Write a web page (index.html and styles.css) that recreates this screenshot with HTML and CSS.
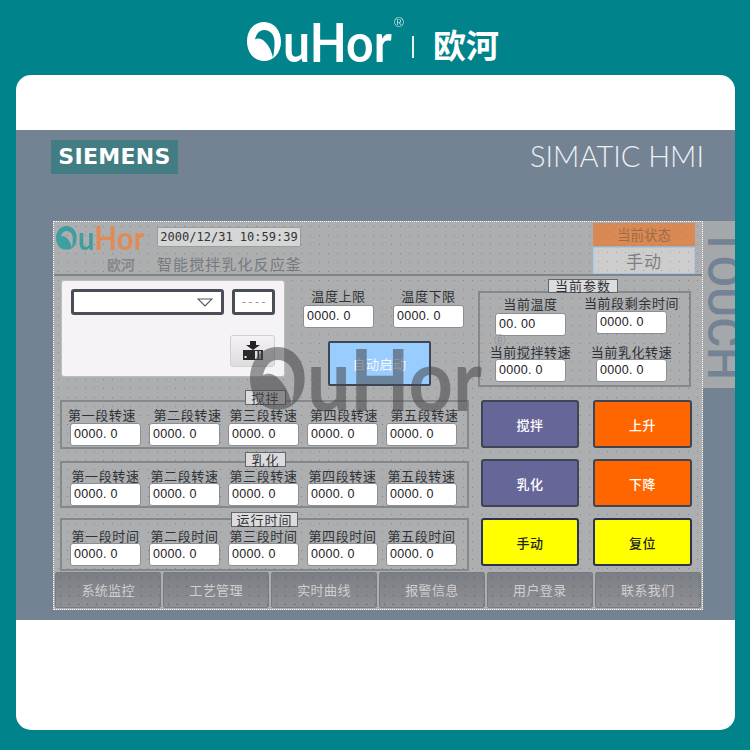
FILE: index.html
```html
<!DOCTYPE html>
<html lang="zh">
<head>
<meta charset="utf-8">
<title>QuHor SIMATIC HMI</title>
<link rel="stylesheet" href="styles.css">
</head>
<body>
<svg class="defs" width="0" height="0" aria-hidden="true">
  <symbol id="logo-o" viewBox="0 0 34 39">
    <path fill-rule="evenodd" d="M17 0C27 0 34 8.500 34 19.500C34 30.500 27 39 17 39C7 39 0 30.500 0 19.500C0 8.500 7 0 17 0ZM8 17.500C9.500 11.500 12.500 8 17 8C23.500 8 27.500 13 27.500 20C27.500 26 27 31 26 35.500C24 27 20 20.500 15 17.500C12 16 9.500 16.500 8 17.500Z"/>
  </symbol>
</svg>

<header class="top">
  <div class="logo logo-head">
    <svg class="logo-o"><use href="#logo-o"/></svg><span class="logo-rest">uHor</span><sup class="logo-reg">®</sup>
  </div>
  <span class="top-rule"></span>
  <span class="top-cn">欧河</span>
</header>

<main class="device">
  <div class="bezel-blank"></div>
  <section class="bezel">
    <div class="brand-row">
      <span class="siemens">SIEMENS</span>
      <span class="simatic">SIMATIC HMI</span>
    </div>
    <div class="screen-row">
      <div class="screen">
        <div class="screen-head">
          <div class="head-logo">
            <div class="logo logo-small">
              <svg class="logo-o"><use href="#logo-o"/></svg><span class="logo-rest">uHor</span>
            </div>
            <span class="head-logo-cn">欧河</span>
          </div>
          <div class="head-text">
            <span class="date">2000/12/31 10:59:39</span>
            <span class="title">智能搅拌乳化反应釜</span>
          </div>
          <div class="status">
            <span class="status-label">当前状态</span>
            <span class="status-value">手动</span>
          </div>
        </div>

        <div class="screen-body">
          <div class="col-left">
            <div class="top-row">
              <div class="panel">
                <div class="panel-row">
                  <div class="select">
                    <svg class="select-arrow" viewBox="0 0 16 9"><path d="M1 1H15L8 8Z" fill="none" stroke="#55585f" stroke-width="1.200"/></svg>
                  </div>
                  <div class="select select-short">----</div>
                </div>
                <div class="panel-action">
                  <button class="icon-btn" aria-label="下载">
                    <svg viewBox="0 0 22 20" width="22" height="20"><path d="M8 0H14V4H18L11 9L4 4H8Z" fill="#222"/><rect x="1" y="9" width="20" height="10" fill="#2b2b2b"/><rect x="2.500" y="15" width="2" height="2" fill="#eee"/><rect x="13" y="10" width="2.500" height="8" fill="#ddd"/><rect x="17" y="10" width="2" height="8" fill="#aaa"/></svg>
                  </button>
                </div>
              </div>
              <div class="limits">
                <div class="limit-grid">
                  <div class="field"><span class="label">温度上限</span><span class="input">0000. 0</span></div>
                  <div class="field"><span class="label">温度下限</span><span class="input">0000. 0</span></div>
                </div>
                <button class="auto-btn">自动启动</button>
              </div>
            </div>

            <section class="group group-a">
              <span class="legend legend-a">搅拌</span>
              <div class="five">
                <span class="label nudge-l7">第一段转速</span><span class="label nudge-r6">第二段转速</span><span class="label">第三段转速</span><span class="label nudge-r3">第四段转速</span><span class="label nudge-r6">第五段转速</span>
                <span class="input">0000. 0</span><span class="input">0000. 0</span><span class="input">0000. 0</span><span class="input">0000. 0</span><span class="input">0000. 0</span>
              </div>
            </section>

            <section class="group group-b">
              <span class="legend legend-a">乳化</span>
              <div class="five">
                <span class="label">第一段转速</span><span class="label">第二段转速</span><span class="label">第三段转速</span><span class="label">第四段转速</span><span class="label">第五段转速</span>
                <span class="input">0000. 0</span><span class="input">0000. 0</span><span class="input">0000. 0</span><span class="input">0000. 0</span><span class="input">0000. 0</span>
              </div>
            </section>

            <section class="group group-c">
              <span class="legend legend-c">运行时间</span>
              <div class="five">
                <span class="label">第一段时间</span><span class="label">第二段时间</span><span class="label">第三段时间</span><span class="label">第四段时间</span><span class="label">第五段时间</span>
                <span class="input">0000. 0</span><span class="input">0000. 0</span><span class="input">0000. 0</span><span class="input">0000. 0</span><span class="input">0000. 0</span>
              </div>
            </section>
          </div>

          <div class="col-right">
            <section class="group group-params">
              <span class="legend legend-params">当前参数</span>
              <div class="params">
                <div class="field"><span class="label">当前温度</span><span class="input">00. 00</span></div>
                <div class="field field-raised"><span class="label">当前段剩余时间</span><span class="input">0000. 0</span></div>
                <div class="field field-low"><span class="label">当前搅拌转速</span><span class="input">0000. 0</span></div>
                <div class="field field-low"><span class="label">当前乳化转速</span><span class="input">0000. 0</span></div>
              </div>
            </section>
            <div class="actions">
              <button class="action action-purple">搅拌</button>
              <button class="action action-orange">上升</button>
              <button class="action action-purple">乳化</button>
              <button class="action action-orange">下降</button>
              <button class="action action-yellow">手动</button>
              <button class="action action-yellow">复位</button>
            </div>
          </div>
        </div>

        <nav class="tabs">
          <span class="tab">系统监控</span>
          <span class="tab">工艺管理</span>
          <span class="tab">实时曲线</span>
          <span class="tab">报警信息</span>
          <span class="tab">用户登录</span>
          <span class="tab">联系我们</span>
        </nav>
      </div>
      <div class="touch"><span class="touch-text">TOUCH</span></div>
    </div>
    <div class="logo logo-mark">
      <svg class="logo-o"><use href="#logo-o"/></svg><span class="logo-rest">uHor</span><sup class="logo-reg">®</sup>
    </div>
  </section>
  <div class="bezel-foot"></div>
</main>
</body>
</html>
```
FILE: styles.css
```css
* { box-sizing: border-box; }
html, body { margin: 0; padding: 0; }
body {
  width: 750px;
  height: 750px;
  overflow: hidden;
  background: #00838a;
  font-family: "Noto Sans CJK SC", "Liberation Sans", sans-serif;
}
.defs { position: absolute; }

/* logo */
.logo { display: flex; align-items: flex-end; font-family: Lato, sans-serif; font-weight: 700; line-height: 1; }
.logo-o { fill: currentColor; flex: none; width: .63em; height: .722em; }
.logo-rest {
  display: block;
  flex: none;
  width: 2.4em;
  height: .722em;
  line-height: .722em;
  margin-left: .03em;
  transform: scaleX(.89);
  transform-origin: left center;
  white-space: nowrap;
}
.logo-reg { font-size: .25em; line-height: 1; opacity: .75; font-family: "Liberation Sans", sans-serif; font-weight: 400; }

/* header */
.top { height: 75px; padding: 22px 0 0 247px; display: flex; align-items: flex-start; color: #fff; }
.logo-head { font-size: 54px; width: 148px; position: relative; }
.logo-head .logo-reg { position: absolute; left: 147px; top: -6px; }
.top-rule { width: 2px; height: 22px; margin: 14px 0 0 17px; background: #e6f3f3; }
.top-cn { font-size: 33px; font-weight: 700; line-height: 36px; margin: 4px 0 0 19px; letter-spacing: 0; }

/* device */
.device { width: 719px; height: 655px; margin-left: 16px; background: #fff; border-radius: 15px; overflow: hidden; }
.bezel-blank { height: 55px; }
.bezel { height: 490px; background: #748394; position: relative; }
.brand-row { height: 91px; padding: 10px 31px 0 35px; display: flex; justify-content: space-between; align-items: flex-start; }
.siemens {
  width: 127px; height: 34px; background: #417d83; color: #fff;
  font: 700 22px/34px "DejaVu Sans", "Liberation Sans", sans-serif;
  letter-spacing: .3px; text-align: center;
}
.simatic { font: 300 29px/36px Lato, sans-serif; color: #edf0f3; white-space: nowrap; margin-top: -2px; }
.screen-row { display: flex; align-items: flex-start; padding-left: 37px; }

/* screen */
.screen {
  width: 650px; height: 389px;
  border: 1px dotted #fff;
  background-color: #adaeb0;
  background-image: radial-gradient(circle, #84868a .7px, transparent 1px);
  background-size: 9px 9px;
  display: flex; flex-direction: column;
}
.touch { width: 32px; height: 167px; background: #a5a8ab; overflow: hidden; }
.touch-text {
  display: block;
  writing-mode: vertical-rl;
  font: 500 46px/46px Roboto, sans-serif;
  color: #748394;
  margin: 7px 0 0 -2px;
  white-space: nowrap;
}

.screen-head { height: 54px; flex: none; display: flex; border-bottom: 2px solid #808488; }
.head-logo { width: 103px; padding: 4px 0 0 2px; display: flex; flex-direction: column; }
.logo-small { font-size: 33px; height: 24px; color: #e08a55; }
.logo-small .logo-o { color: #3f9ea0; }
.head-logo-cn { font-size: 14px; line-height: 16px; color: #85888b; font-weight: 700; align-self: flex-end; margin: 6px 22px 0 0; }
.logo-small .logo-rest { background: linear-gradient(90deg, #3f9ea0 23%, #e08a55 23%); -webkit-background-clip: text; background-clip: text; color: transparent; }
.head-text { width: 436px; padding-top: 5px; display: flex; flex-direction: column; align-items: flex-start; }
.date {
  width: 144px; height: 20px; background: #d5d6d6; border: 1px solid #9b9d9f; border-radius: 2px;
  font: 12px/18px "DejaVu Sans Mono", monospace; color: #333; text-align: center; white-space: nowrap;
}
.title { font-size: 15px; line-height: 18px; margin-top: 8px; color: #777a7d; letter-spacing: 1.1px; white-space: nowrap; }
.status { width: 102px; padding-top: 1px; display: flex; flex-direction: column; }
.status-label {
  height: 23px; background-color: #d98a54; background-image: radial-gradient(circle, #bd7a4e .7px, transparent 1px); background-size: 9px 9px;
  color: #a06a48; font-size: 13.500px; line-height: 23px; text-align: center;
}
.status-value {
  height: 27px; margin-top: 1px; background-color: #cdcdcd; background-image: radial-gradient(circle, #a2a3a5 .7px, transparent 1px); background-size: 9px 9px;
  border: 1px solid #a0c8ea; color: #7c7f83; font-size: 17px; line-height: 25px; text-align: center; letter-spacing: 1px;
}

/* body */
.screen-body { flex: 1; display: flex; padding-left: 6px; }
.col-left { width: 409px; }
.col-right { width: 213px; margin-left: 9px; }
.top-row { height: 109px; margin-top: 5px; display: flex; }
.panel { width: 224px; height: 97px; margin: -1px 0 0 1px; background: #f6f3f7; border: 1px solid #bdbdbd; border-radius: 3px; padding: 8px 9px 0; }
.panel-row { display: flex; gap: 8px; }
.select {
  width: 155px; height: 26px; border: 3px solid #4a4e58; border-radius: 3px; background: #fff;
  display: flex; align-items: center; justify-content: flex-end; padding-right: 8px;
}
.select-arrow { width: 16px; height: 9px; }
.select-short { width: 43px; justify-content: center; padding: 0; color: #8d8d8d; font: 11px/1 "Liberation Mono", monospace; letter-spacing: 0; }
.panel-action { display: flex; justify-content: flex-end; margin-top: 20px; }
.icon-btn {
  width: 45px; height: 32px; padding: 0; border: 1px solid #cfcfcf; border-radius: 3px;
  background: linear-gradient(#f4f2f4, #dfdcdf); display: flex; align-items: center; justify-content: center;
}
.limits { margin-left: 18px; padding-top: 8px; width: 161px; }
.limit-grid { display: grid; grid-template-columns: 71px 71px; column-gap: 19px; }
.auto-btn {
  display: block; width: 103px; height: 45px; margin: 13px 0 0 25px; padding: 0;
  background: #99ccff; border: 2px solid #3c4654; border-radius: 2px; color: #f7f9fb;
  font: 13px/1 "Noto Sans CJK SC", sans-serif; letter-spacing: .5px;
}

/* fields */
.field { display: flex; flex-direction: column; align-items: center; }
.label { font-size: 13px; line-height: 14px; color: #2e3236; white-space: nowrap; letter-spacing: .6px; text-align: center; justify-self: center; }
.input {
  display: block; width: 71px; height: 23px; background: #fff; border: 1px solid #8b8e93; border-radius: 3px;
  font: 12.500px/21px "Liberation Sans", sans-serif; letter-spacing: .3px; color: #1d2024; padding-left: 3px; white-space: pre;
}
.limit-grid .input { margin-top: 2px; }
.nudge-l7 { margin-left: -7px; }
.nudge-r6 { margin-left: 6px; }
.nudge-r3 { margin-left: 3px; }

/* groups */
.group { border: 2px solid #85888b; display: flex; flex-direction: column; align-items: flex-start; }
.legend {
  display: block; height: 15px; background: #dcdbde; border: 1px solid #63666a; color: #2e3236;
  font-size: 13px; line-height: 13px; text-align: center; letter-spacing: 1px; white-space: nowrap;
}
.legend-a { width: 41px; margin-left: 183px; }
.legend-c { width: 67px; margin-left: 169px; }
.legend-params { width: 70px; height: 14px; line-height: 12px; margin: -14px 0 0 68px; }
.five { display: grid; grid-template-columns: repeat(5, 71px); column-gap: 8px; padding-left: 8px; }
.group-a { margin-top: 10px; height: 49px; }
.group-a .legend { margin-top: -12px; margin-bottom: 3px; }
.group-a .label { margin-bottom: 1px; }
.group-b { margin-top: 12px; height: 47px; }
.group-b .legend { margin-top: -11px; margin-bottom: 2px; }
.group-c { margin-top: 10px; height: 53px; }
.group-c .legend { margin-top: -8px; margin-bottom: 2px; }
.group-c .label { margin-bottom: 0; }
.group-params { margin-top: 15px; height: 96px; }
.params { display: grid; grid-template-columns: 71px 71px; column-gap: 30px; padding: 4px 0 0 15px; }
.params .input { margin-top: 2px; }
.field-raised { margin-top: -1px; }
.field-raised .input { margin-top: 1px; }
.field-low { margin-top: 9px; }
.field-low .input { margin-top: 0; }
.actions { display: grid; grid-template-columns: 98px 99px; column-gap: 14px; row-gap: 11px; margin: 13px 0 0 3px; }
.action {
  height: 48px; padding: 0; border: 2px solid #3c4654; border-radius: 3px;
  font: 500 13px/1 "Noto Sans CJK SC", sans-serif; letter-spacing: .5px; color: #fff;
}
.action-purple { background: #666699; }
.action-orange { background: #ff6600; }
.action-yellow { background: #ffff00; color: #222; border-color: #2b3152; }

/* tabs */
.tabs { flex: none; height: 36px; display: grid; grid-template-columns: repeat(6, 1fr); column-gap: 1.500px; margin: 0 1px 1px; }
.tab {
  background-color: #83868b;
  background-image: radial-gradient(circle, #6c6f73 .8px, transparent 1.1px), linear-gradient(#7b7e84, #8e9094);
  background-size: 9px 9px, 100% 100%;
  border: 1px solid #777c82;
  border-radius: 2px;
  color: #cfd0d0; font-size: 13px; line-height: 34px; letter-spacing: .4px; text-align: center;
}

/* translucent watermark over the screen */
.logo-mark { position: absolute; left: 234px; top: 217px; font-size: 87px; color: rgba(70, 70, 72, .55); }
.logo-mark .logo-reg { position: absolute; left: 244px; top: -14px; color: #8a8c8e; font-size: 16px; }

.bezel-foot { height: 110px; }
```
